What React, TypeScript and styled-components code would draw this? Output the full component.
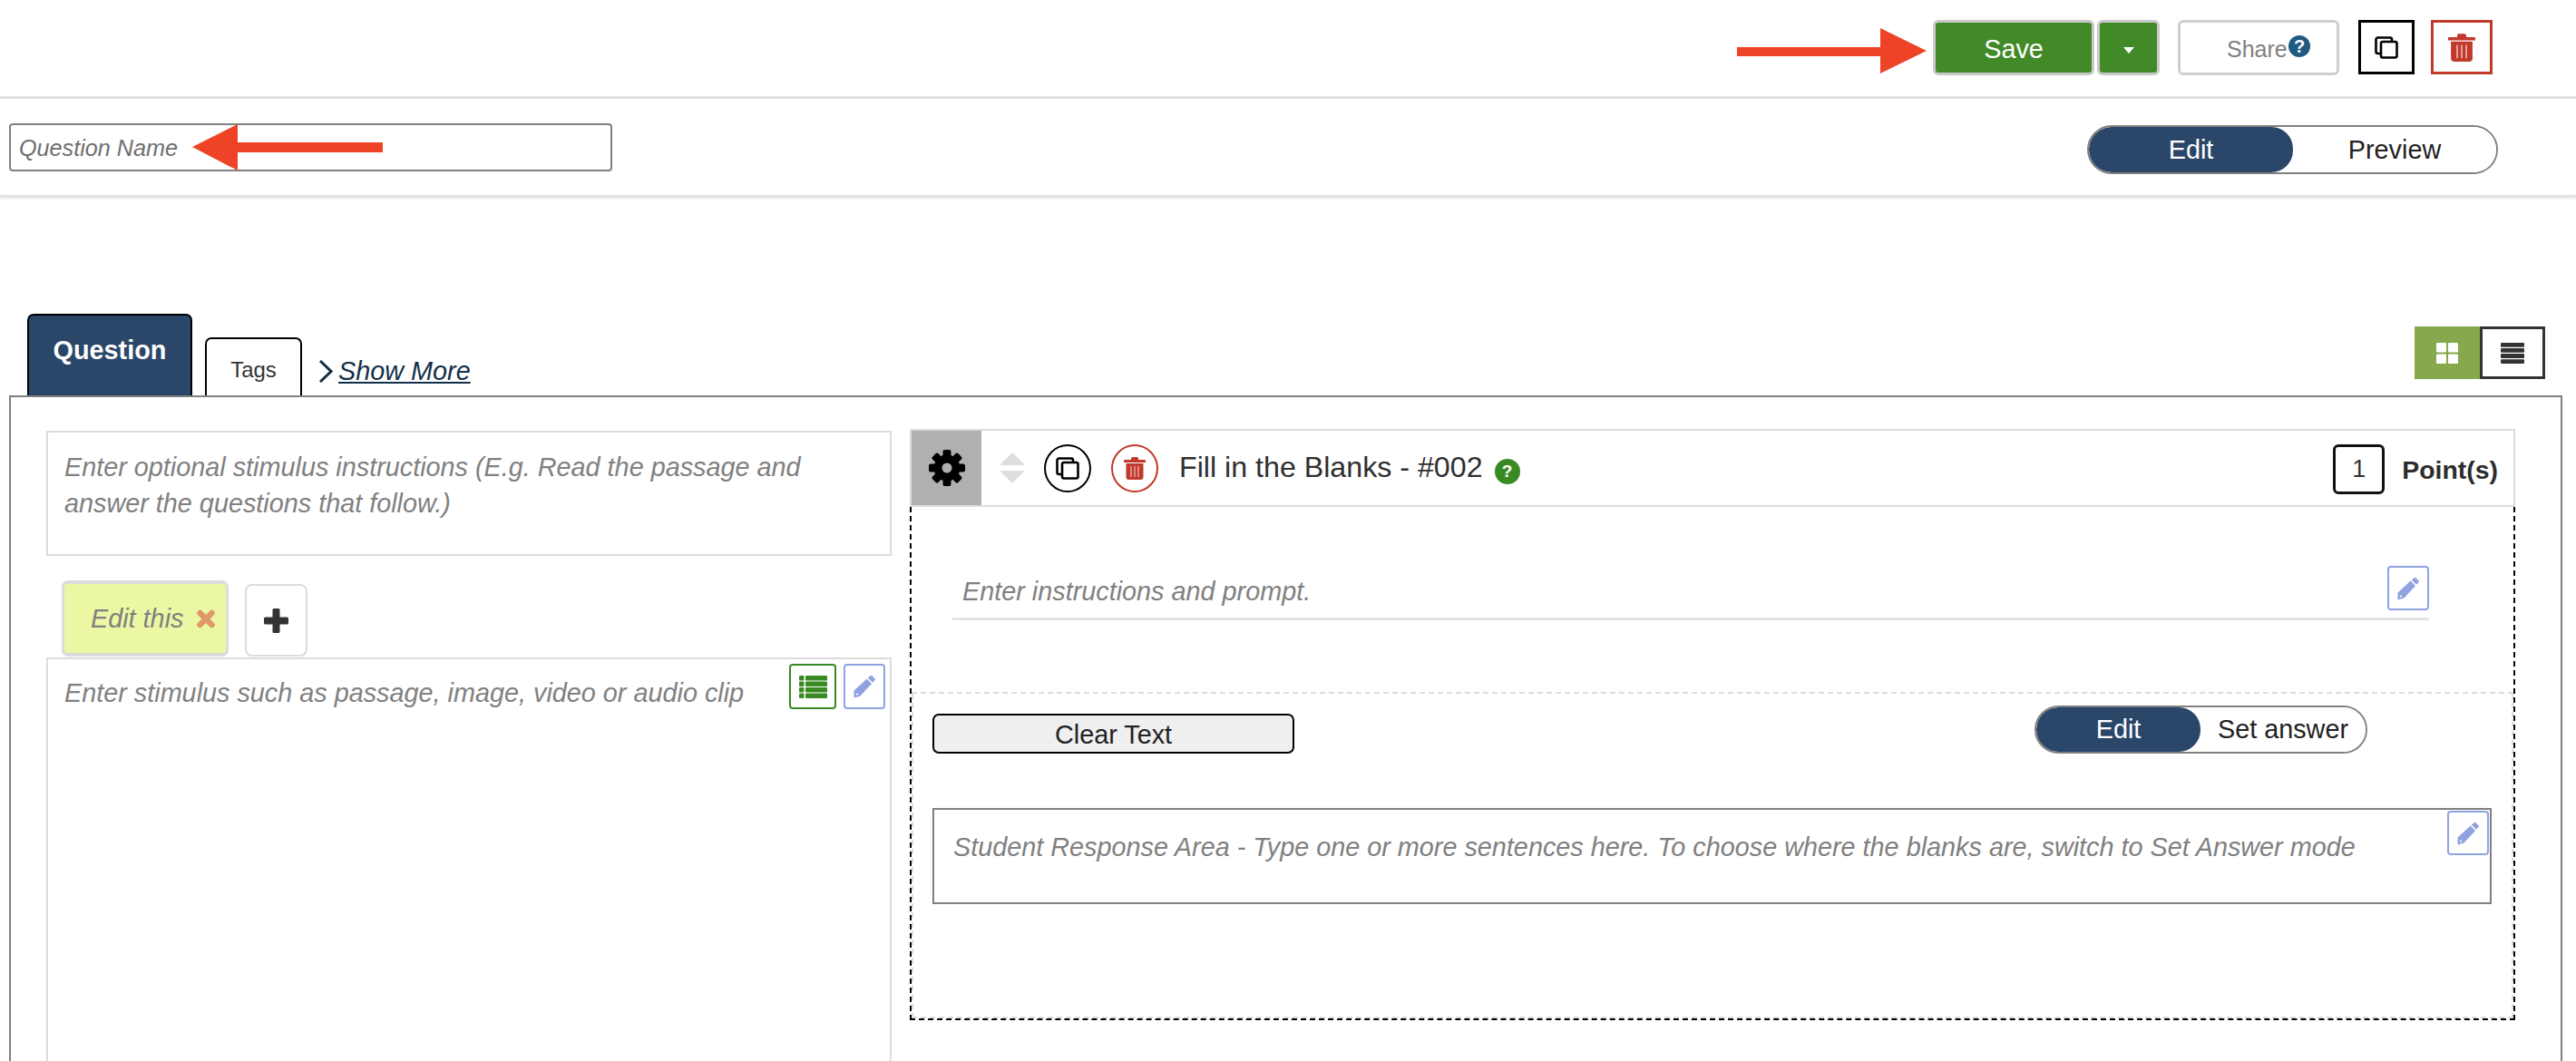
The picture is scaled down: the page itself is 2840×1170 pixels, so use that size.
import React from "react";
import styled, { createGlobalStyle } from "styled-components";

const GlobalStyle = createGlobalStyle`
  html, body {
    margin: 0;
    padding: 0;
    background: #fff;
    overflow: hidden;
    font-family: "Liberation Sans", Arial, sans-serif;
    color: #333;
  }
  * {
    box-sizing: border-box;
  }
`;

const NAVY = "#2a4669";
const GREY = "#808080";
const LIGHT = "#dcdcdc";
const RED = "#c0392b";
const PERIWINKLE = "#8fa3e0";
const GREEN = "#3a8a24";
const PLACEHOLDER = "#808080";

const Page = styled.div`
  width: 2840px;
  height: 1170px;
  overflow: hidden;
`;

const TopBar = styled.header`
  height: 109px;
  padding: 22px 92px 0 0;
  display: flex;
  justify-content: flex-end;
  align-items: flex-start;
  border-bottom: 3px solid #e0e0e0;
`;

const SaveArrow = styled.svg`
  width: 209px;
  height: 50px;
  margin: 9px 7px 0 0;
`;

const SaveButton = styled.button`
  width: 178px;
  height: 61px;
  padding: 3px 0 0;
  background: #418a27;
  border: 3px solid #c9c9c9;
  border-radius: 6px;
  color: #fff;
  font: 28.8px "Liberation Sans", Arial, sans-serif;
`;

const CaretButton = styled.button`
  width: 69px;
  height: 61px;
  margin: 0 20px 0 3px;
  background: #418a27;
  border: 3px solid #c9c9c9;
  border-radius: 6px;
  display: flex;
  align-items: center;
  justify-content: center;
  padding-top: 6px;

  &::after {
    content: "";
    border-left: 6px solid transparent;
    border-right: 6px solid transparent;
    border-top: 7px solid #fff;
  }
`;

const ShareButton = styled.button`
  width: 178px;
  height: 61px;
  margin-right: 21px;
  padding: 4px 0 0 51px;
  background: #fff;
  border: 3px solid #cfcfcf;
  border-radius: 6px;
  color: #808080;
  font: 25px "Liberation Sans", Arial, sans-serif;
  display: flex;
  align-items: center;

  svg {
    margin: -8px 0 0 1px;
  }
`;

const SquareButton = styled.button<{ $color: string; $width: number; $gap?: number }>`
  width: ${(p) => p.$width}px;
  height: 60px;
  margin-right: ${(p) => p.$gap ?? 0}px;
  padding: 0;
  background: #fff;
  border: 3px solid ${(p) => p.$color};
  display: flex;
  align-items: center;
  justify-content: center;
`;

const NameBar = styled.div`
  height: 109px;
  padding: 27px 86px 0 10px;
  display: flex;
  justify-content: space-between;
  align-items: flex-start;
  border-bottom: 3px solid #e4e4e4;
  box-shadow: 0 2px 3px rgba(0, 0, 0, 0.06);
`;

const NameField = styled.div`
  position: relative;
  width: 665px;
  height: 53px;
  padding-left: 9px;
  border: 2px solid ${GREY};
  border-radius: 4px;
  font-size: 25.2px;
  font-style: italic;
  line-height: 50px;
  color: #6f6f6f;
`;

const NameArrow = styled.svg`
  position: absolute;
  left: 200px;
  top: -1px;
  width: 210px;
  height: 51px;
`;

const Toggle = styled.div<{ $width: number; $height: number; $offset?: number }>`
  width: ${(p) => p.$width}px;
  height: ${(p) => p.$height}px;
  margin-top: ${(p) => p.$offset ?? 0}px;
  display: flex;
  border: 2px solid ${GREY};
  border-radius: 27px;
  overflow: hidden;
  font-size: 28.8px;
`;

const ToggleOption = styled.div<{ $active?: boolean; $width?: number }>`
  ${(p) => (p.$width ? `width: ${p.$width}px;` : "flex: 1;")}
  display: flex;
  align-items: center;
  justify-content: center;
  color: ${(p) => (p.$active ? "#fff" : "#222")};
  background: ${(p) => (p.$active ? NAVY : "#fff")};
  border-radius: ${(p) => (p.$active ? "24px" : "0")};
`;

const TabsRow = styled.div`
  height: 218px;
  padding: 0 34px 0 30px;
  display: flex;
  align-items: flex-end;
`;

const ActiveTab = styled.div`
  width: 182px;
  height: 90px;
  padding-top: 22px;
  background: ${NAVY};
  border: 2px solid #000;
  border-bottom: none;
  border-radius: 7px 7px 0 0;
  color: #fff;
  font-size: 28.8px;
  font-weight: bold;
  text-align: center;
`;

const Tab = styled.div`
  width: 107px;
  height: 64px;
  margin: 0 18px 0 14px;
  padding-top: 20px;
  border: 2px solid #000;
  border-bottom: none;
  border-radius: 7px 7px 0 0;
  font-size: 24px;
  text-align: center;
`;

const ShowMore = styled.a`
  margin-bottom: 10px;
  display: flex;
  align-items: center;
  gap: 6px;
  color: #12304a;
  font-size: 28.8px;
  font-style: italic;
  text-decoration: underline;
`;

const ViewSwitch = styled.div`
  margin: 0 0 18px auto;
  display: flex;
`;

const ViewButton = styled.div<{ $active?: boolean }>`
  width: 72px;
  height: 58px;
  display: flex;
  align-items: center;
  justify-content: center;
  background: ${(p) => (p.$active ? "#87a84c" : "#fff")};
  border: ${(p) => (p.$active ? "none" : "3px solid #333")};
`;

const Card = styled.main`
  width: 2815px;
  height: 800px;
  margin-left: 10px;
  padding: 35px 48px 0 39px;
  display: grid;
  grid-template-columns: 932px 1770px;
  column-gap: 20px;
  align-items: start;
  border: 2px solid ${GREY};
`;

const LeftColumn = styled.section`
  padding-top: 2px;
  display: flex;
  flex-direction: column;
`;

const Placeholder = styled.div`
  color: ${PLACEHOLDER};
  font-size: 28.8px;
  font-style: italic;
  line-height: 40px;
`;

const InstructionsBox = styled(Placeholder)`
  height: 138px;
  padding: 18px 60px 0 18px;
  border: 2px solid ${LIGHT};
`;

const PassageTabs = styled.div`
  margin: 27px 0 1px 17px;
  display: flex;
  align-items: flex-end;
  gap: 18px;
`;

const PassageTab = styled.div`
  width: 184px;
  height: 84px;
  padding: 0 0 0 29px;
  display: flex;
  align-items: center;
  gap: 15px;
  background: #ecf7a3;
  border: 3px solid ${LIGHT};
  border-width: 4px 3px;
  border-radius: 7px;
  color: #808080;
  font-size: 28.8px;
  font-style: italic;
`;

const AddTab = styled.div`
  width: 69px;
  height: 80px;
  display: flex;
  align-items: center;
  justify-content: center;
  border: 2px solid ${LIGHT};
  border-radius: 8px;
`;

const PassageBox = styled(Placeholder)`
  position: relative;
  height: 520px;
  padding: 17px 18px;
  border: 2px solid ${LIGHT};
`;

const PassageTools = styled.div`
  position: absolute;
  top: 5px;
  right: 5px;
  display: flex;
  gap: 8px;
`;

const ToolButton = styled.div<{ $color: string; $width: number; $height: number }>`
  width: ${(p) => p.$width}px;
  height: ${(p) => p.$height}px;
  display: flex;
  align-items: center;
  justify-content: center;
  background: #fff;
  border: 2px solid ${(p) => p.$color};
  border-radius: 4px;
`;

const PromptTool = styled(ToolButton)`
  margin-bottom: 8px;
`;

const WidgetHeader = styled.div`
  height: 86px;
  padding-right: 17px;
  display: flex;
  align-items: center;
  border: 2px solid ${LIGHT};
`;

const GearCell = styled.div`
  width: 77px;
  align-self: stretch;
  display: flex;
  align-items: center;
  justify-content: center;
  background: #b0b0b0;
`;

const SortArrows = styled.div`
  margin: 0 21px 0 20px;
  display: flex;
  flex-direction: column;
  gap: 6px;
`;

const SortArrow = styled.span<{ $down?: boolean }>`
  border-left: 14px solid transparent;
  border-right: 14px solid transparent;
  ${(p) => (p.$down ? "border-top" : "border-bottom")}: 14px solid #dedede;
`;

const CircleButton = styled.div<{ $color: string }>`
  width: 52px;
  height: 53px;
  margin-right: 22px;
  display: flex;
  align-items: center;
  justify-content: center;
  border: 2px solid ${(p) => p.$color};
  border-radius: 50%;
`;

const WidgetTitle = styled.div`
  margin: 0 13px 2px 1px;
  color: #2f2f2f;
  font-size: 32.2px;
`;

const HelpDot = styled.span`
  width: 28px;
  height: 28px;
  margin-top: 8px;
  display: flex;
  align-items: center;
  justify-content: center;
  background: ${GREEN};
  border-radius: 50%;
  color: #fff;
  font-size: 19px;
  font-weight: bold;
`;

const PointsBox = styled.div`
  width: 57px;
  height: 55px;
  margin: 3px 0 0 auto;
  display: flex;
  align-items: center;
  justify-content: center;
  border: 3px solid #111;
  border-radius: 6px;
  font-size: 27px;
`;

const PointsLabel = styled.div`
  margin: 5px 0 0 19px;
  color: #2c2c2c;
  font-size: 28.4px;
  font-weight: bold;
`;

const WidgetBody = styled.div`
  border: 2px dashed #000;
  border-top: none;
`;

const PromptSection = styled.div`
  height: 206px;
  padding: 65px 93px 0 45px;
  border-bottom: 2px dashed ${LIGHT};
`;

const PromptRow = styled.div`
  height: 60px;
  padding-left: 11px;
  display: flex;
  align-items: flex-end;
  justify-content: space-between;
  border-bottom: 3px solid #e4e4e4;
`;

const PromptText = styled(Placeholder)`
  padding-bottom: 9px;
`;

const AnswerSection = styled.div`
  height: 358px;
  padding: 13px 22px 0 21px;
  border: 2px dashed ${LIGHT};
  border-top: none;
`;

const AnswerControls = styled.div`
  width: 1582px;
  display: flex;
  justify-content: space-between;
  align-items: flex-end;
`;

const ClearButton = styled.button`
  width: 399px;
  height: 44px;
  padding: 2px 0 0;
  background: #efefef;
  border: 2px solid #000;
  border-radius: 7px;
  color: #222;
  font: 28.8px "Liberation Sans", Arial, sans-serif;
`;

const ResponseBox = styled(Placeholder)`
  position: relative;
  width: 1719px;
  height: 106px;
  margin-top: 60px;
  padding: 21px 0 0 21px;
  border: 2px solid ${GREY};
`;

const ResponseTool = styled.div`
  position: absolute;
  top: 1px;
  right: 1px;
`;

const PencilIcon = () => (
  <svg width="26" height="26" viewBox="0 0 25 26" fill={PERIWINKLE}>
    <path d="M19 1.2a1.5 1.5 0 0 1 2 0l3 3a1.5 1.5 0 0 1 0 2l-2.4 2.6-5.3-5.3z" />
    <path d="M15.2 4.6l5.3 5.3L8 23.4 1 25.6v-8z" />
    <circle cx="4.6" cy="21.6" r="1.1" fill="#fff" />
  </svg>
);

const CopyIcon = () => (
  <svg width="26" height="25" viewBox="0 0 26 25" fill="none" stroke="#000" strokeWidth="2.6">
    <rect x="7" y="6" width="17.5" height="17.5" rx="2" />
    <path d="M7 19H3.5a2 2 0 0 1-2-2V3.5a2 2 0 0 1 2-2H17a2 2 0 0 1 2 2V6" />
  </svg>
);

const TrashIcon = ({ width, height }: { width: number; height: number }) => (
  <svg width={width} height={height} viewBox="0 0 24 26" fill={RED} preserveAspectRatio="none">
    <path d="M8 2.5A1.5 1.5 0 0 1 9.5 1h5A1.5 1.5 0 0 1 16 2.5V4h7a1 1 0 0 1 1 1v2H0V5a1 1 0 0 1 1-1h7z" />
    <path d="M2.5 8h19v15a3 3 0 0 1-3 3h-13a3 3 0 0 1-3-3z" />
    <path stroke="#eab8b0" strokeWidth="1.3" d="M8 11v12M12 11v12M16 11v12" />
  </svg>
);

const GearIcon = () => (
  <svg width="40" height="40" viewBox="-20 -20 40 40" fill="#000">
    <circle r="14.5" />
    {[0, 45, 90, 135, 180, 225, 270, 315].map((angle) => (
      <rect key={angle} x="-4.5" y="-20" width="9" height="9" rx="2" transform={`rotate(${angle})`} />
    ))}
    <circle r="5.5" fill="#b0b0b0" />
  </svg>
);

const PlusIcon = () => (
  <svg width="27" height="27" viewBox="0 0 27 27" fill="#333">
    <rect y="9.5" width="27" height="8" rx="1.5" />
    <rect x="9.5" width="8" height="27" rx="1.5" />
  </svg>
);

const CloseIcon = () => (
  <svg width="20" height="21" viewBox="0 0 20 21" stroke="#dd9a68" strokeWidth="6.5" strokeLinecap="round">
    <path d="M3.5 4l13 13M16.5 4l-13 13" />
  </svg>
);

const BarsIcon = () => (
  <svg width="26" height="23" viewBox="0 0 26 23" fill="#333">
    <rect width="26" height="4.8" rx="1" />
    <rect y="6" width="26" height="4.8" rx="1" />
    <rect y="12.1" width="26" height="4.8" rx="1" />
    <rect y="18.2" width="26" height="4.8" rx="1" />
  </svg>
);

const TableIcon = () => (
  <svg width="31" height="25" viewBox="0 0 31 25" fill={GREEN}>
    {[0, 6.5, 13, 19.5].map((y) => (
      <React.Fragment key={y}>
        <rect y={y} width="5.5" height="5.5" rx="1" />
        <rect x="7" y={y} width="24" height="5.5" rx="1" />
      </React.Fragment>
    ))}
  </svg>
);

const GridIcon = () => (
  <svg width="24" height="23" viewBox="0 0 24 23" fill="#fff">
    <rect width="11" height="10.5" rx="1" />
    <rect x="13" width="11" height="10.5" rx="1" />
    <rect y="12.5" width="11" height="10.5" rx="1" />
    <rect x="13" y="12.5" width="11" height="10.5" rx="1" />
  </svg>
);

const Chevron = () => (
  <svg width="16" height="25" viewBox="0 0 16 25" fill="none" stroke="#12304a" strokeWidth="3">
    <path d="M2 1l12 11.5L2 24" />
  </svg>
);

const ShareHelp = () => (
  <svg width="24" height="24" viewBox="0 0 24 24">
    <circle cx="12" cy="12" r="12" fill="#1f5a80" />
    <text x="12" y="19" fontSize="20" fontWeight="bold" fill="#fff" textAnchor="middle" fontFamily="Liberation Sans">
      ?
    </text>
  </svg>
);

export default function App() {
  return (
    <Page>
      <GlobalStyle />
      <TopBar>
        <SaveArrow viewBox="0 0 209 50">
          <path d="M0 21h158V0l51 25-51 25V31H0z" fill="#ee4326" />
        </SaveArrow>
        <SaveButton>Save</SaveButton>
        <CaretButton />
        <ShareButton>
          Share
          <ShareHelp />
        </ShareButton>
        <SquareButton $color="#000" $width={62} $gap={18}>
          <CopyIcon />
        </SquareButton>
        <SquareButton $color={RED} $width={68}>
          <TrashIcon width={30} height={32} />
        </SquareButton>
      </TopBar>

      <NameBar>
        <NameField>
          Question Name
          <NameArrow viewBox="0 0 210 51">
            <path d="M0 25L50 0v20h160v11H50v20z" fill="#ee4326" />
          </NameArrow>
        </NameField>
        <Toggle $width={453} $height={54} $offset={2}>
          <ToggleOption $active $width={225}>
            Edit
          </ToggleOption>
          <ToggleOption>Preview</ToggleOption>
        </Toggle>
      </NameBar>

      <TabsRow>
        <ActiveTab>Question</ActiveTab>
        <Tab>Tags</Tab>
        <ShowMore>
          <Chevron />
          Show More
        </ShowMore>
        <ViewSwitch>
          <ViewButton $active>
            <GridIcon />
          </ViewButton>
          <ViewButton>
            <BarsIcon />
          </ViewButton>
        </ViewSwitch>
      </TabsRow>

      <Card>
        <LeftColumn>
          <InstructionsBox>
            Enter optional stimulus instructions (E.g. Read the passage and answer the questions that follow.)
          </InstructionsBox>
          <PassageTabs>
            <PassageTab>
              Edit this
              <CloseIcon />
            </PassageTab>
            <AddTab>
              <PlusIcon />
            </AddTab>
          </PassageTabs>
          <PassageBox>
            Enter stimulus such as passage, image, video or audio clip
            <PassageTools>
              <ToolButton $color={GREEN} $width={52} $height={50}>
                <TableIcon />
              </ToolButton>
              <ToolButton $color={PERIWINKLE} $width={46} $height={50}>
                <PencilIcon />
              </ToolButton>
            </PassageTools>
          </PassageBox>
        </LeftColumn>

        <section>
          <WidgetHeader>
            <GearCell>
              <GearIcon />
            </GearCell>
            <SortArrows>
              <SortArrow />
              <SortArrow $down />
            </SortArrows>
            <CircleButton $color="#000">
              <CopyIcon />
            </CircleButton>
            <CircleButton $color={RED}>
              <TrashIcon width={24} height={26} />
            </CircleButton>
            <WidgetTitle>Fill in the Blanks - #002</WidgetTitle>
            <HelpDot>?</HelpDot>
            <PointsBox>1</PointsBox>
            <PointsLabel>Point(s)</PointsLabel>
          </WidgetHeader>
          <WidgetBody>
            <PromptSection>
              <PromptRow>
                <PromptText>Enter instructions and prompt.</PromptText>
                <PromptTool $color={PERIWINKLE} $width={46} $height={49}>
                  <PencilIcon />
                </PromptTool>
              </PromptRow>
            </PromptSection>
            <AnswerSection>
              <AnswerControls>
                <ClearButton>Clear Text</ClearButton>
                <Toggle $width={367} $height={53}>
                  <ToggleOption $active $width={181}>
                    Edit
                  </ToggleOption>
                  <ToggleOption>Set answer</ToggleOption>
                </Toggle>
              </AnswerControls>
              <ResponseBox>
                Student Response Area - Type one or more sentences here. To choose where the blanks are, switch to Set
                Answer mode
                <ResponseTool>
                  <ToolButton $color={PERIWINKLE} $width={46} $height={49}>
                    <PencilIcon />
                  </ToolButton>
                </ResponseTool>
              </ResponseBox>
            </AnswerSection>
          </WidgetBody>
        </section>
      </Card>
    </Page>
  );
}
